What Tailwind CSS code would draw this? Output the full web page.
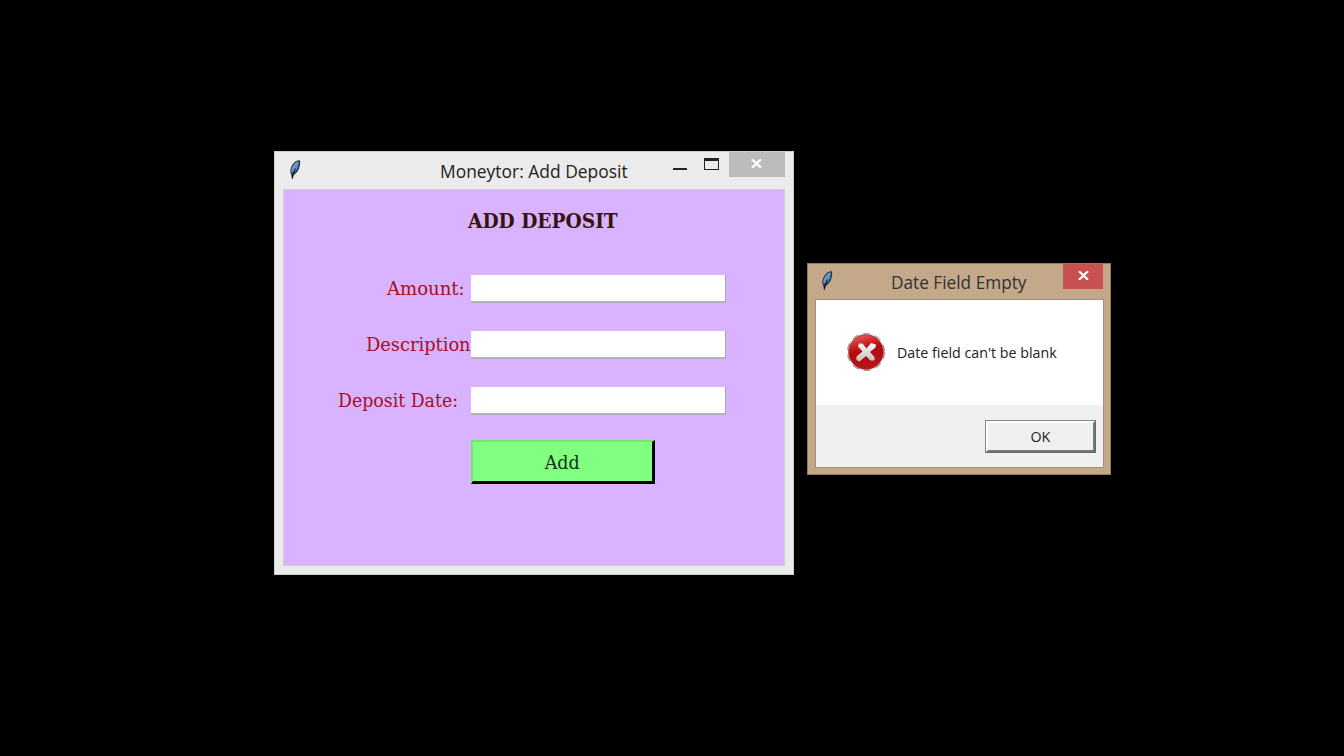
<!DOCTYPE html>
<html lang="en">
<head>
<meta charset="utf-8">
<title>Moneytor</title>
<script src="https://cdn.jsdelivr.net/npm/@tailwindcss/browser@4"></script>
</head>
<body class="relative h-screen overflow-hidden bg-black">
<svg class="absolute h-0 w-0">
  <defs>
    <linearGradient id="red" x1="0" y1="0" x2="0.3" y2="1"><stop offset="0" stop-color="#ee6a66"/><stop offset=".35" stop-color="#cf2424"/><stop offset=".55" stop-color="#b3090d"/><stop offset="1" stop-color="#b81418"/></linearGradient>
    <linearGradient id="silver" x1="0" y1="0" x2="0" y2="1"><stop offset="0" stop-color="#f6f6f6"/><stop offset="1" stop-color="#c4c0c0"/></linearGradient>
  </defs>
  <symbol id="feather" viewBox="0 0 14 22">
    <path d="M11.800 1.300C8 .6 3.600 5 2.500 10.200c-.4 1.800-.2 3.600.5 4.900l1.200 5.400 1.300-4.200c3.300-1.800 5.400-5 6.100-8.700.5-2.100.9-4.300.2-6.300z" fill="#2a3440"/>
    <path d="M10.600 2.300C7.500 2.600 4.300 7 3.500 10.500c-.3 1.500-.2 2.800.2 3.800z" fill="#8a9dac"/>
    <path d="M11 2.700C7.500 4.500 4.800 9 4.300 14.800c2.900-1.500 4.900-4 5.600-7.100.4-1.600 1.100-3.300 1.100-5z" fill="#5592dc"/>
    <path d="M7.400 9.500C6.200 11.500 5 13.500 4.300 19.500" fill="none" stroke="#101820" stroke-width="1.200"/>
  </symbol>
</svg>

<!-- Deposit window -->
<section class="absolute left-[274px] top-[151px] flex h-[424px] w-[520px] flex-col border border-[#d0d0d0] bg-[#ebebeb] px-2 pb-2">
  <header class="flex h-[37px] shrink-0 font-['Open_Sans',sans-serif]">
    <svg class="mt-[7px] ml-[5px] h-[22px] w-[14px] shrink-0"><use href="#feather"/></svg>
    <h1 class="w-[371px] shrink-0 pt-[7px] pl-[138px] text-[18px] leading-[25px] text-[#222]"><span class="inline-block origin-left scale-x-[0.968] whitespace-nowrap">Moneytor: Add Deposit</span></h1>
    <svg class="h-[25px] w-14 shrink-0" viewBox="0 0 56 25" shape-rendering="crispEdges"><path d="M0 16h14v2H0z" fill="#222"/><path d="M31 6h15v12H31zM32 9v8h13V9z" fill="#222" fill-rule="evenodd"/></svg>
    <div class="flex h-[25px] w-14 shrink-0 justify-center bg-[#bcbcbc] pt-[7px]"><svg class="h-[9px] w-[12px]" viewBox="0 0 12 9"><path d="M1 .2l9 8.600M10 .2L1 8.800" stroke="#fff" stroke-width="2.200"/></svg></div>
  </header>
  <main class="flex flex-1 flex-col border border-[#d3cbdc] bg-[#d9b3ff] font-['DejaVu_Serif',serif]">
    <h2 class="h-[85px] pl-[184px] pt-[17px] text-[20px] leading-[28px] font-bold whitespace-nowrap text-[#35150c]"><span class="inline-block origin-left scale-x-[1.034] font-stretch-condensed">ADD DEPOSIT</span></h2>
    <form class="grid auto-rows-[28px] grid-cols-[187px_255px] gap-y-[28px] text-[18px] leading-[27px] text-[#a50d20]">
      <label class="pl-[103px] whitespace-nowrap"><span class="inline-block origin-left scale-x-[1.115] font-stretch-condensed">Amount:</span></label>
      <input class="border-r border-b-2 border-r-[#aaa3b2] border-b-[#b4b0b8] bg-white">
      <label class="pl-[82px] whitespace-nowrap"><span class="inline-block origin-left scale-x-[1.1] font-stretch-condensed">Description</span></label>
      <input class="border-r border-b-2 border-r-[#aaa3b2] border-b-[#b4b0b8] bg-white">
      <label class="pl-[54px] whitespace-nowrap"><span class="inline-block origin-left scale-x-[1.072] font-stretch-condensed">Deposit Date:</span></label>
      <input class="border-r border-b-2 border-r-[#aaa3b2] border-b-[#b4b0b8] bg-white">
    </form>
    <button type="button" class="mt-[25px] ml-[187px] h-[44px] w-[184px] border-t-2 border-r-[3px] border-b-[3px] border-l-2 border-t-[#73e573] border-r-black border-b-black border-l-[#73e573] bg-[#80ff80] pt-[2px] text-[18px] text-[#123012]"><span class="inline-block scale-x-[1.08] font-stretch-condensed">Add</span></button>
  </main>
</section>

<!-- Error dialog -->
<section class="absolute left-[807px] top-[263px] flex h-[212px] w-[304px] flex-col border border-[#937c64] bg-[#c4a88a] pr-[6px] pb-[6px] pl-[7px]">
  <header class="flex h-[35px] shrink-0 font-['Open_Sans',sans-serif]">
    <svg class="mt-[6px] ml-[5px] h-[22px] w-[14px] shrink-0"><use href="#feather"/></svg>
    <h1 class="ml-[57px] w-[172px] shrink-0 pt-[6px] text-[18px] leading-[25px] text-[#333]"><span class="inline-block origin-left scale-x-[0.957] whitespace-nowrap">Date Field Empty</span></h1>
    <div class="flex h-[25px] w-10 shrink-0 justify-center bg-[#c75050] pt-[7px]"><svg class="h-[9px] w-[12px]" viewBox="0 0 12 9"><path d="M2 .2l9 8.600M11 .2L2 8.800" stroke="#fff" stroke-width="2.200"/></svg></div>
  </header>
  <div class="flex flex-1 flex-col border border-[#a58e74] bg-[#f0f0f0] font-['Open_Sans',sans-serif]">
    <div class="flex h-[105px] items-center bg-white pl-[30px]">
      <svg class="-mt-px h-10 w-10 shrink-0" viewBox="0 0 40 40">
        <circle cx="20" cy="20" r="18.500" fill="#eee" stroke="#999" stroke-width="1.200" stroke-dasharray="7 5"/>
        <circle cx="20" cy="20" r="17.300" fill="url(#red)" stroke="#a51c1c" stroke-width=".7"/>
        <path d="M13 11.500h3.500l4 5 4.500-5.500 5 1.500-.5 3-5.500 4.500 4.500 5v3.500h-4l-4.500-4.500-6.500 5.500-3-1.500v-3.500l6-5-4.500-5z" fill="url(#silver)"/>
      </svg>
      <p class="ml-[11px] text-[14px] whitespace-nowrap text-[#222]"><span class="inline-block origin-left scale-x-[1.018]">Date field can't be blank</span></p>
    </div>
    <button type="button" class="mt-[15px] mr-[7px] h-[33px] w-[111px] self-end border border-t-[#858585] border-r-[#696969] border-b-[#696969] border-l-[#858585] text-[15px] text-[#222]"><span class="flex h-full items-center justify-center border-2 border-t-white border-r-[#777] border-b-[#777] border-l-white"><span class="scale-x-[0.95]">OK</span></span></button>
  </div>
</section>
</body>
</html>
